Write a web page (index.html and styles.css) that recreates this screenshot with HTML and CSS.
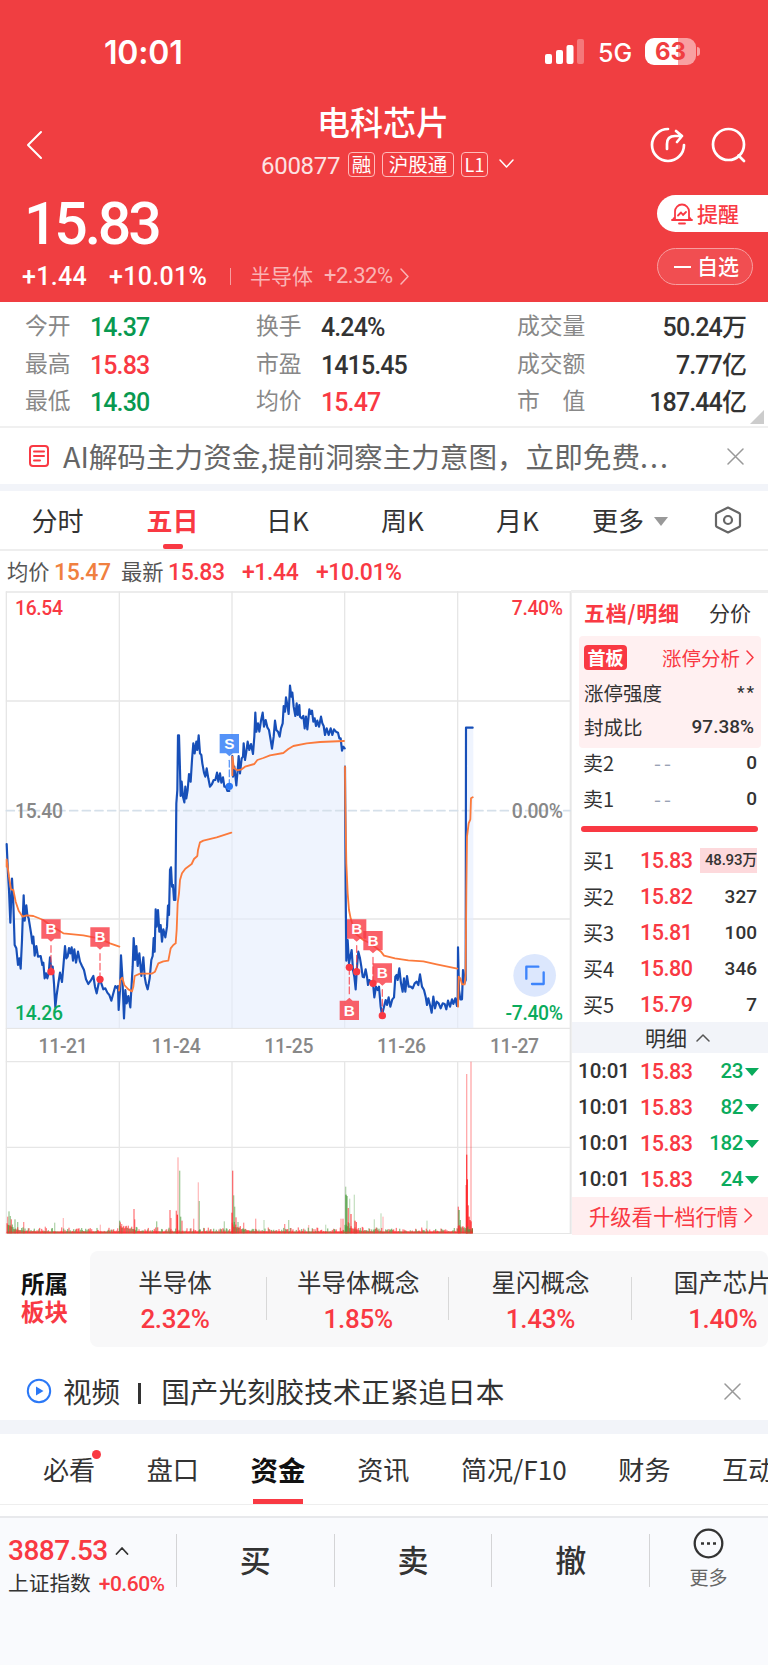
FILE: index.html
```
<!DOCTYPE html>
<html lang="zh-CN">
<head>
	<meta charset="UTF-8">
	<title>电科芯片 600877</title>
	<link rel="stylesheet" href="styles.css">
</head>
<body>
	<header class="top">
		<div class="status">
			<span class="clock">10:01</span>
			<svg class="signal" width="39" height="26" viewBox="0 0 39 26">
				<rect x="0" y="15" width="7" height="10" rx="2"/>
				<rect x="11" y="11" width="7" height="14" rx="2"/>
				<rect x="21.500" y="6" width="7" height="19" rx="2"/>
				<rect x="32" y="0" width="7" height="25" rx="2" opacity=".3"/>
			</svg>
			<span class="net">5G</span>
			<span class="battery">63</span>
			<i class="battery-cap"></i>
		</div>
		<div class="nav">
			<svg class="back" width="18" height="30" viewBox="0 0 18 30"><path d="M16 2L3 15l13 13"/></svg>
			<div class="name">
				<h1>电科芯片</h1>
				<div class="code">
					<span class="num">600877</span>
					<em class="t1">融</em><em class="t2">沪股通</em><em class="t3">L1</em>
					<svg width="15" height="10" viewBox="0 0 15 10"><path d="M1 1l6.500 7L14 1"/></svg>
				</div>
			</div>
			<svg class="share" width="36" height="36" viewBox="0 0 36 36"><path d="M18 2A16 16 0 1 0 34 18M17 22v-5q0-8 8-8h7M26 4l6 5-5 6"/></svg>
			<svg class="search" width="36" height="36" viewBox="0 0 36 36"><circle cx="17.500" cy="17.500" r="15.500"/><path d="M27.500 28.500L33 34"/></svg>
		</div>
		<div class="quote">
			<div class="price num">15.83</div>
			<div class="change">
				<b class="num">+1.44</b><b class="num pct">+10.01%</b>
				<i></i>
				<span>半导体</span><span class="num ind">+2.32%</span>
				<svg width="10" height="17" viewBox="0 0 10 17"><path d="M1 1l7 7.500L1 16"/></svg>
			</div>
			<div class="actions">
				<a class="alert">
					<svg width="22" height="22" viewBox="0 0 22 22"><path d="M4 16V8.500a7 7 0 0 1 14 0V16M1 17h20M8 20.500h6M7 12.500l3-3 2 2.500 3-3M1.500 17L4 14M20.500 17L18 14"/></svg>
					提醒
				</a>
				<a class="fav"><i></i>自选</a>
			</div>
		</div>
	</header>

	<section class="stats">
		<dl><dt>今开</dt><dd class="down">14.37</dd><dt>最高</dt><dd class="up">15.83</dd><dt>最低</dt><dd class="down">14.30</dd></dl>
		<dl><dt>换手</dt><dd>4.24%</dd><dt>市盈</dt><dd>1415.45</dd><dt>均价</dt><dd class="up">15.47</dd></dl>
		<dl class="last"><dt>成交量</dt><dd>50.24万</dd><dt>成交额</dt><dd>7.77亿</dd><dt>市　值</dt><dd>187.44亿</dd></dl>
		<i class="corner"></i>
	</section>

	<div class="notice ad">
		<svg width="20" height="22" viewBox="0 0 20 22"><rect x="1" y="1" width="18" height="20" rx="3"/><path d="M5 6.500h10M5 11h10M5 15.500h6"/></svg>
		<p>AI解码主力资金,提前洞察主力意图，立即免费<span>...</span></p>
		<svg class="close" width="17" height="17" viewBox="0 0 17 17"><path d="M1 1l15 15M16 1L1 16"/></svg>
	</div>

	<nav class="period">
		<a>分时</a><a class="active">五日</a><a>日K</a><a>周K</a><a>月K</a>
		<a class="more">更多<i></i></a>
		<svg width="28" height="28" viewBox="0 0 28 28"><path d="M14 1.500l11 5.500q1 .500 1 1.500v11q0 1-1 1.500l-11 5.500-11-5.500q-1-.500-1-1.500v-11q0-1 1-1.500z"/><circle cx="14" cy="14" r="4"/></svg>
	</nav>

	<div class="legend">
		<span>均价</span><b class="num avg">15.47</b>
		<span>最新</span><b class="num">15.83</b><b class="num">+1.44</b><b class="num">+10.01%</b>
	</div>

	<main class="market">
		<!-- three drawing units per css pixel -->
		<svg class="chart" width="571" height="644" viewBox="0 0 1713 1932">
			<g class="grid">
				<path d="M19 6H1713M19 333H1710M19 987H1710M19 1315H1710M19 1415H1710M19 1672H1710M19 1931H1710"/>
				<path d="M19 6V1931M358 6V1315M696 6V1315M1034 6V1315M1373 6V1315M1711 6V1931M358 1415V1931M696 1415V1931M1034 1415V1931M1373 1415V1931"/>
			</g>
			<path id="area" class="area"/>
			<path class="mid" d="M19 662H1710"/>
			<path id="price" class="price-line"/>
			<path id="avg" class="avg-line"/>
			<g id="volume"></g>
			<g id="marks"></g>
			<g class="axis">
				<text class="red" x="45" y="74">16.54</text>
				<text x="45" y="683">15.40</text>
				<text class="green" x="45" y="1290">14.26</text>
				<text class="red end" x="1688" y="74">7.40%</text>
				<text class="end" x="1688" y="683">0.00%</text>
				<text class="green end" x="1688" y="1290">-7.40%</text>
				<text class="date" x="189" y="1388">11-21</text>
				<text class="date" x="528" y="1388">11-24</text>
				<text class="date" x="866" y="1388">11-25</text>
				<text class="date" x="1204" y="1388">11-26</text>
				<text class="date" x="1543" y="1388">11-27</text>
			</g>
			<circle cx="1604" cy="1156" r="64" fill="#dce7fd"/>
			<path d="M1579 1166v-36h36M1596 1182h35v-35" fill="none" stroke="#3d84fb" stroke-width="7"/>
		</svg>

		<aside class="book">
			<div class="book-tabs"><b>五档/明细</b><span>分价</span></div>
			<div class="limit">
				<div><em>首板</em><span class="link">涨停分析<svg width="8" height="15" viewBox="0 0 8 15"><path d="M1 1l6 6.500L1 14"/></svg></span></div>
				<div><span>涨停强度</span><b class="stars">**</b></div>
				<div><span>封成比</span><b class="num">97.38%</b></div>
			</div>
			<ul class="levels sell">
				<li><span>卖2</span><i>--</i><b>0</b></li>
				<li><span>卖1</span><i>--</i><b>0</b></li>
			</ul>
			<div class="bar"></div>
			<ul class="levels">
				<li><span>买1</span><strong>15.83</strong><b class="hot">48.93万</b></li>
				<li><span>买2</span><strong>15.82</strong><b>327</b></li>
				<li><span>买3</span><strong>15.81</strong><b>100</b></li>
				<li><span>买4</span><strong>15.80</strong><b>346</b></li>
				<li><span>买5</span><strong>15.79</strong><b>7</b></li>
			</ul>
			<div class="detail">明细<svg width="14" height="9" viewBox="0 0 14 9"><path d="M1 8l6-6 6 6"/></svg></div>
			<ul class="levels ticks">
				<li><span>10:01</span><strong>15.83</strong><b>23</b></li>
				<li><span>10:01</span><strong>15.83</strong><b>82</b></li>
				<li><span>10:01</span><strong>15.83</strong><b>182</b></li>
				<li><span>10:01</span><strong>15.83</strong><b>24</b></li>
			</ul>
			<div class="upgrade">升级看十档行情<svg width="9" height="15" viewBox="0 0 9 15"><path d="M1 1l6.500 6.500L1 14"/></svg></div>
		</aside>
	</main>

	<section class="sectors">
		<h2>所属<span>板块</span></h2>
		<ul>
			<li>半导体<b class="num">2.32%</b></li>
			<li>半导体概念<b class="num">1.85%</b></li>
			<li>星闪概念<b class="num">1.43%</b></li>
			<li>国产芯片<b class="num">1.40%</b></li>
		</ul>
	</section>

	<div class="notice video">
		<svg width="26" height="26" viewBox="0 0 26 26"><circle cx="13" cy="13" r="11.200"/><path d="M10 8.500v9l7.500-4.500z"/></svg>
		<p><span>视频</span><i></i>国产光刻胶技术正紧追日本</p>
		<svg class="close" width="17" height="17" viewBox="0 0 17 17"><path d="M1 1l15 15M16 1L1 16"/></svg>
	</div>

	<nav class="tabs">
		<a class="dot">必看</a><a>盘口</a><a class="active">资金</a><a>资讯</a><a>简况/F10</a><a>财务</a><a>互动</a>
	</nav>

	<footer class="trade">
		<div class="index">
			<p class="num">3887.53<svg width="14" height="9" viewBox="0 0 14 9"><path d="M1.500 8L7 2l5.500 6"/></svg></p>
			<p>上证指数<b class="num">+0.60%</b></p>
		</div>
		<a>买</a><a>卖</a><a>撤</a>
		<div class="other">
			<svg width="31" height="31" viewBox="0 0 31 31"><circle cx="15.500" cy="15.500" r="13.800"/><path d="M8 15.500h3M14 15.500h3M20 15.500h3"/></svg>
			更多
		</div>
	</footer>
	<script src="chart.js"></script>
</body>
</html>
```
FILE: styles.css
```
/*--reset--*/
* {
	box-sizing: border-box;
}
body, h1, h2, p, ul, dl, dd {
	margin: 0;
	padding: 0;
}
body {
	width: 768px;
	height: 1665px;
	overflow: hidden;
	background: #fff;
	color: #333;
	font-family: "Noto Sans CJK SC", sans-serif;
}
ul {
	list-style: none;
}
em, i {
	font-style: normal;
}
svg {
	display: block;
	flex: none;
	fill: none;
	stroke-linecap: round;
	stroke-linejoin: round;
}
.num, dd, .levels b, .levels strong, .ticks span {
	font-family: Roboto, "Noto Sans CJK SC", sans-serif;
	font-weight: 500;
}
.up {
	color: #f93943;
}
.down {
	color: #089950;
}

/* header */
.top {
	height: 302px;
	background: #f03e41;
	color: #fff;
}
.top svg {
	stroke: #fff;
	stroke-width: 2;
}
.status {
	display: flex;
	align-items: center;
	height: 103px;
	padding: 0 68px 0 104px;
	font-family: Inter, sans-serif;
}
.clock {
	width: 441px;
	padding-top: 2px;
	font-size: 32px;
	font-weight: 600;
	letter-spacing: -.200px;
}
.top .signal {
	fill: #fff;
	stroke: none;
}
.net {
	width: 61px;
	padding: 2px 0 0 14px;
	font-size: 25px;
	font-weight: 500;
}
.battery {
	width: 51px;
	height: 27px;
	border-radius: 9px;
	background: linear-gradient(90deg, #fff 64%, #f8a0a1 64%);
	color: #f03e41;
	font-size: 24px;
	font-weight: 700;
	line-height: 27px;
	text-align: center;
}
.battery-cap {
	width: 3px;
	height: 9px;
	margin-left: 1px;
	border-radius: 0 4px 4px 0;
	background: #f8a0a1;
}
.nav {
	display: flex;
	height: 91px;
}
.back {
	margin: 27px 0 0 25px;
}
.name {
	width: 607px;
	padding-left: 218px;
}
.name h1 {
	margin: -3px 0 3px 56px;
	font-size: 33px;
	font-weight: 500;
	line-height: 42px;
}
.code {
	display: flex;
	align-items: center;
	height: 38px;
	white-space: nowrap;
}
.code .num {
	width: 87px;
	padding-top: 3px;
	font-size: 24px;
	font-weight: 400;
	letter-spacing: -.3px;
	opacity: .85;
}
.code em {
	height: 25px;
	margin-right: 7px;
	border: 1px solid #fbb;
	border-radius: 4px;
	font-size: 19.500px;
	line-height: 22px;
	text-align: center;
}
.code .t1 {
	width: 27px;
}
.code .t2 {
	width: 72px;
}
.code .t3 {
	width: 27px;
	margin-right: 11px;
	font-size: 18px;
}
.top .code svg {
	stroke-width: 1.500;
}
.nav .share {
	margin-top: 24px;
}
.nav .search {
	margin: 24px 0 0 25px;
}
.top .share, .top .search {
	stroke-width: 2.700;
}
.quote {
	display: grid;
	grid-template-columns: 657px 111px;
	grid-template-rows: 60px 48px;
}
.price {
	padding-left: 24px;
	font-size: 59px;
	line-height: 60px;
	letter-spacing: -3.200px;
}
.change {
	display: flex;
	align-items: center;
	padding: 0 0 3px 22px;
	font-size: 21px;
	line-height: 44px;
}
.change b {
	width: 87px;
	font-size: 25px;
	letter-spacing: .300px;
}
.change .pct {
	width: 121px;
}
.change i {
	width: 1px;
	height: 17px;
	margin-right: 19px;
	background: #f79fa0;
}
.change span {
	width: 74px;
	margin-top: -3px;
	color: #fab4b5;
}
.change .ind {
	margin-top: -1px;
	font-size: 22px;
	font-weight: 400;
	letter-spacing: -.500px;
}
.top .change svg {
	margin-left: 2px;
	stroke: #fab4b5;
	stroke-width: 1.500;
}
.actions {
	grid-column: 2;
	grid-row: 1 / 3;
}
.actions a {
	display: flex;
	align-items: center;
	width: 111px;
	height: 37px;
	margin-top: 1px;
	padding: 0 0 2px 14px;
	border-radius: 19px 0 0 19px;
	background: #fff;
	color: #f93943;
	font-size: 21px;
	font-weight: 500;
}
.top .alert svg {
	margin: 2px 4px 0 0;
	stroke: #f93943;
	stroke-width: 1.800;
}
.actions .fav {
	width: 96px;
	margin-top: 16px;
	padding-bottom: 3px;
	border: 1px solid #f79fa0;
	border-radius: 19px;
	background: #f14e51;
	color: #fff;
}
.fav i {
	width: 17px;
	height: 2px;
	margin: 3px 6px 0 2px;
	background: #fff;
}

/* day stats */
.stats {
	position: relative;
	display: flex;
	height: 126px;
	padding: 6px 22px 0 25px;
	border-bottom: 2px solid #f0f0f0;
}
.stats dl {
	display: grid;
	grid-template-columns: 65px 166px;
	grid-auto-rows: 37.500px;
	line-height: 37px;
}
.stats .last {
	grid-template-columns: 100px 129px;
	margin-left: 30px;
}
.stats dt {
	margin-top: -2px;
	color: #888;
	font-size: 22.800px;
}
.stats dd {
	padding-top: 1px;
	font-size: 25px;
	letter-spacing: -.900px;
}
.stats .last dd {
	text-align: right;
}
.corner {
	position: absolute;
	right: 4px;
	bottom: 2px;
	border-left: 14px solid transparent;
	border-bottom: 14px solid #ccc;
}

/* one-line notices */
.notice {
	display: flex;
	align-items: center;
	height: 56px;
	padding-left: 29px;
	font-size: 28.600px;
}
.notice p {
	margin-top: -2px;
	padding-left: 14px;
	white-space: nowrap;
}
.notice .close {
	stroke: #999;
	stroke-width: 1.500;
}
.ad {
	color: #666;
	stroke: #f93943;
	stroke-width: 2;
}
.ad p {
	width: 678px;
}
.ad span {
	letter-spacing: 2px;
}
.period {
	display: flex;
	height: 67px;
	border-top: 7px solid #f2f4f9;
	border-bottom: 2px solid #eee;
	font-size: 26px;
	line-height: 57px;
}
.period a {
	width: 115px;
	text-align: center;
}
.period .active {
	position: relative;
	color: #f93943;
	font-weight: 700;
}
.period .active::after {
	content: "";
	position: absolute;
	left: 48px;
	bottom: 0;
	width: 20px;
	height: 5px;
	border-radius: 2px;
	background: #f93943;
}
.period .more {
	display: flex;
	align-items: center;
	height: 57px;
	width: 138px;
	padding-left: 17px;
}
.more i {
	margin: 4px 0 0 10px;
	border: 7px solid transparent;
	border-top: 9px solid #999;
	border-bottom: 0;
}
.period svg {
	margin: 15px 0 0 1px;
	stroke: #666;
	stroke-width: 2.200;
}
.legend {
	display: flex;
	height: 39px;
	padding-left: 7px;
	color: #555;
	font-size: 21.300px;
	line-height: 40px;
	white-space: nowrap;
}
.legend span {
	width: 47px;
}
.legend b {
	width: 74px;
	color: #f93943;
	font-size: 23px;
	line-height: 44px;
	letter-spacing: -.400px;
}
.legend .avg {
	width: 67px;
	color: #f08040;
}

/* chart */
.market {
	display: flex;
	height: 644px;
}
.grid {
	stroke: #e6e6e6;
	stroke-width: 4;
}
.area {
	fill: #e5ecfd;
	fill-opacity: .6;
}
.mid {
	stroke: #d5e0ea;
	stroke-width: 5;
	stroke-dasharray: 24 14;
}
.price-line {
	stroke: #174fb8;
	stroke-width: 6.500;
}
.avg-line {
	stroke: #fb7a3c;
	stroke-width: 5.500;
}
.axis text {
	fill: #888;
	font-family: Roboto, sans-serif;
	font-size: 58px;
	font-weight: 500;
	letter-spacing: -1px;
}
.axis .red {
	fill: #f93943;
}
.axis .green {
	fill: #0aab5c;
}
.axis .end {
	text-anchor: end;
}
.axis .date {
	text-anchor: middle;
}
.mark text {
	fill: #fff;
	stroke: none;
	font: 700 46px "Liberation Sans", sans-serif;
	text-anchor: middle;
}

/* order book */
.book {
	width: 197px;
	border-top: 3px solid #eee;
	border-left: 1px solid #eee;
}
.book-tabs {
	display: flex;
	height: 43px;
	padding-left: 12px;
	font-size: 21px;
	line-height: 39px;
}
.book-tabs b {
	width: 125px;
	color: #f93943;
	letter-spacing: .700px;
}
.limit {
	width: 182px;
	height: 112px;
	margin-left: 7px;
	padding: 0 7px 0 5px;
	border-radius: 4px;
	background: #fff0f1;
	font-size: 19.500px;
}
.limit div {
	display: flex;
	align-items: center;
	justify-content: space-between;
	height: 34px;
}
.limit div:first-child {
	height: 39px;
	padding-top: 4px;
}
.limit em {
	width: 43px;
	height: 25px;
	border-radius: 4px;
	background: #f93943;
	color: #fff;
	font-size: 18px;
	font-weight: 700;
	line-height: 25px;
	text-align: center;
}
.limit .num {
	font-size: 19px;
}
.link {
	display: flex;
	align-items: center;
	color: #f93943;
}
.link svg, .upgrade svg {
	margin-left: 6px;
	stroke: #f93943;
	stroke-width: 1.500;
}
.limit .stars {
	font: 500 17px/14px Roboto, sans-serif;
	letter-spacing: 2px;
	margin-right: -2px;
}
.levels {
	padding-right: 11px;
	padding-left: 11px;
	font-size: 20px;
}
.levels li {
	display: flex;
	align-items: center;
	height: 36px;
}
.sell {
	height: 66px;
	margin-top: -4px;
	margin-bottom: 16px;
}
.levels span {
	width: 57px;
}
.levels i {
	width: 40px;
	padding-left: 14px;
	color: #99a3b5;
	letter-spacing: 3px;
}
.levels b {
	margin-left: auto;
	font-size: 19px;
}
.levels strong {
	color: #f93943;
	font-size: 21.500px;
	letter-spacing: -.500px;
}
.bar {
	width: 177px;
	height: 6px;
	margin: 0 0 10px 9px;
	border-radius: 3px;
	background: #f93943;
}
.levels .hot {
	height: 25px;
	width: 57px;
	padding-left: 5px;
	background: #fdd9dc;
	font-size: 15px;
	line-height: 25px;
	letter-spacing: -.200px;
	white-space: nowrap;
}
.detail {
	display: flex;
	align-items: center;
	height: 31px;
	padding: 0 0 2px 73px;
	background: #f2f4f9;
	font-size: 21px;
}
.detail svg {
	margin: 2px 0 0 9px;
	stroke: #555;
	stroke-width: 1.500;
}
.ticks {
	height: 144px;
	padding-left: 6px;
	padding-right: 9px;
}
.ticks span {
	width: 62px;
	font-size: 20.500px;
}
.ticks b {
	color: #0aab5c;
	font-size: 20.500px;
	letter-spacing: -.400px;
}
.ticks b::after {
	content: "";
	display: inline-block;
	margin-left: 2px;
	border: 7px solid transparent;
	border-top: 8px solid #0aab5c;
	border-bottom: 0;
	vertical-align: 2px;
}
.upgrade {
	display: flex;
	align-items: center;
	height: 38px;
	padding: 0 0 2px 17px;
	background: #ffeeef;
	color: #f93943;
	font-size: 21.300px;
}

/* sectors */
.sectors {
	display: flex;
	height: 129px;
	padding-top: 17px;
}
.sectors h2 {
	width: 90px;
	padding: 18px 0 0 21px;
	color: #111;
	font-size: 23.500px;
	line-height: 28px;
}
.sectors h2 span {
	display: block;
	color: #f93943;
}
.sectors ul {
	display: flex;
	width: 678px;
	height: 96px;
	border-radius: 8px;
	overflow: hidden;
	background: #f8f8f9;
}
.sectors li {
	position: relative;
	flex: none;
	width: 182.300px;
	padding-top: 13px;
	font-size: 24.500px;
	line-height: 36px;
	text-align: center;
	white-space: nowrap;
}
.sectors li:first-child {
	width: 177px;
	padding-right: 7px;
}
.sectors li::after {
	content: "";
	position: absolute;
	top: 26px;
	right: 0;
	width: 1px;
	height: 43px;
	background: #d8d8d8;
}
.sectors b {
	display: block;
	padding-top: 1px;
	color: #f93943;
	font-size: 26px;
	letter-spacing: -.300px;
}
.video {
	height: 57px;
	padding: 0 0 1px 26px;
	stroke: #2b78f6;
	stroke-width: 2;
}
.video path {
	fill: #2b78f6;
	stroke: none;
}
.video .close path {
	stroke: #999;
}
.video p {
	width: 672px;
	padding-left: 11px;
}
.video i {
	display: inline-block;
	width: 3px;
	height: 21px;
	margin: 0 20px 0 18px;
	background: #333;
	vertical-align: -1px;
}

/* page tabs */
.tabs {
	display: flex;
	height: 85px;
	border-top: 14px solid #f2f4f9;
	border-bottom: 1px solid #eee;
	padding-left: 43px;
	gap: 51.600px;
	overflow: hidden;
	font-size: 26.100px;
	line-height: 71px;
	white-space: nowrap;
}
.tabs a {
	position: relative;
	flex: none;
}
.tabs .active {
	color: #111;
	font-size: 27.500px;
	font-weight: 700;
}
.tabs .active::after {
	content: "";
	position: absolute;
	bottom: 0;
	left: 2px;
	width: 50px;
	height: 5px;
	background: #f93943;
}
.dot::after {
	content: "";
	position: absolute;
	top: 16px;
	right: -6px;
	width: 9px;
	height: 9px;
	border-radius: 50%;
	background: #f93943;
}

/* trade bar */
.trade {
	display: flex;
	height: 149px;
	margin-top: 11px;
	padding-top: 16px;
	border-top: 2px solid #e8e9ec;
	background: #f9fafd;
}
.trade > a, .other {
	height: 53px;
	width: 157.700px;
	border-left: 1px solid #d4d4d6;
	font-size: 31px;
	font-weight: 500;
	line-height: 50px;
	text-align: center;
}
.index {
	width: 176px;
	padding-left: 8px;
	font-size: 20.700px;
	line-height: 31px;
	white-space: nowrap;
}
.index p:first-child {
	display: flex;
	align-items: center;
	color: #f93943;
	font-size: 28px;
	line-height: 33px;
	letter-spacing: -.500px;
}
.index svg {
	margin-left: 7px;
	stroke: #333;
	stroke-width: 1.800;
}
.index b {
	margin-left: 8px;
	color: #f93943;
	font-size: 21px;
	letter-spacing: -.500px;
}
.trade .other {
	display: flex;
	flex-direction: column;
	align-items: center;
	width: 118px;
	color: #666;
	font-size: 19px;
	font-weight: 400;
	line-height: 28px;
}
.other svg {
	margin: -6px 0 4px;
	stroke: #333;
	stroke-width: 2.300;
	stroke-linecap: butt;
}
```
FILE: chart.js
```
// x,y pairs, one string per trading day
const price = [
	'20,762 24,850 27,900 31,998 36,866 40,940 44,1065 49,1075 54,1125 58,1105 62,1136 66,1050 68,990 71,916 74,992 79,946 82,975 86,985 90,1010 94,1035 97,1060 100,1040 104,1097 109,1068 114,1100 122,1098 127,1125 130,1118 134,1165 138,1150 142,1165 146,1150 150,1102 153,1130 158,1130 162,1180 166,1252 170,1215 175,1180 180,1148 186,1176 190,1130 195,1068 199,1105 203,1100 207,1074 211,1090 215,1072 219,1112 223,1078 228,1118 234,1085 240,1115 246,1128 252,1140 258,1168 265,1182 272,1172 280,1158 285,1190 290,1210 296,1180 300,1168 304,1180 310,1198 316,1195 322,1208 328,1215 334,1232 340,1210 346,1188 352,1195 354,1188 356,1260',
	'356,1260 360,1200 363,1096 367,1160 372,1285 376,1200 380,1240 385,1218 391,1252 395,1180 398,1130 401,1044 405,1110 409,1068 413,1128 418,1090 424,1158 430,1102 434,1160 438,1182 443,1198 449,1165 454,1110 458,1098 461,1044 464,1085 467,958 470,1010 474,960 478,1025 482,1005 486,1055 490,1018 496,1042 501,1010 504,947 507,975 510,840 513,832 516,890 519,885 522,930 526,930 529,640 532,600 534,436 537,436 540,540 542,618 545,575 549,620 553,637 556,590 559,625 563,600 567,552 572,575 576,510 580,460 584,490 589,455 592,480 596,436 600,490 604,495 607,520 612,548 616,560 620,535 625,565 630,590 636,582 641,570 646,570 651,548 655,575 660,550 664,578 669,562 673,590 678,590 682,603 688,603',
	'697,498 699,560 703,530 709,586 713,540 716,498 720,550 725,505 729,500 731,460 735,510 739,485 743,455 748,480 753,462 759,492 763,440 766,368 769,425 774,400 778,425 783,392 788,368 792,410 797,390 802,412 807,420 812,450 816,476 821,440 825,392 829,420 834,425 839,440 843,415 848,400 851,348 855,365 858,322 862,345 866,372 870,287 874,320 877,308 881,350 886,378 890,340 893,375 898,345 900,380 905,385 910,378 914,415 918,380 922,418 928,358 932,372 936,362 940,395 944,385 948,408 952,392 957,410 963,380 967,400 971,408 975,435 980,415 986,435 992,415 997,435 1002,418 1008,425 1014,428 1018,445 1022,445 1026,482 1030,470 1034,475',
	'1035,530 1037,900 1039,1112 1043,1050 1047,1120 1055,1080 1059,1140 1063,1160 1067,1198 1071,1130 1075,1085 1080,1105 1084,1130 1088,1160 1092,1162 1097,1138 1101,1160 1104,1185 1108,1170 1114,1180 1120,1190 1123,1222 1128,1190 1133,1200 1137,1190 1142,1250 1146,1275 1152,1250 1157,1230 1161,1245 1166,1222 1171,1250 1177,1228 1182,1222 1186,1160 1190,1155 1193,1170 1198,1135 1203,1180 1208,1205 1212,1165 1216,1205 1221,1158 1226,1190 1232,1190 1238,1195 1244,1180 1250,1175 1255,1185 1260,1153 1266,1190 1272,1200 1277,1220 1281,1245 1285,1225 1290,1245 1295,1268 1300,1220 1305,1255 1310,1235 1316,1240 1322,1255 1328,1240 1334,1242 1339,1258 1344,1232 1350,1250 1356,1228 1360,1242 1366,1225 1371,1248',
	'1373,1248 1374,1072 1377,1200 1381,1228 1386,1228 1389,1140 1393,1180 1397,1170 1398,413 1418,413'
]
const avg = [
	'20,830 20,808 27,860 33,898 40,900 47,935 56,962 68,980 80,976 100,978 130,990 150,1005 190,1030 250,1036 300,1046 330,1060 358,1070',
	'357,1202 361,1170 367,1163 373,1185 385,1198 396,1204 400,1190 404,1158 420,1151 455,1151 465,1145 475,1120 490,1114 505,1112 512,1075 520,1065 527,1060 530,1020 533,940 537,910 540,870 546,850 556,836 575,822 582,807 592,798 594,780 600,757 610,752 650,742 694,728',
	'697,556 697,500 702,535 712,541 725,538 735,530 763,522 772,510 790,504 810,496 850,489 865,477 880,468 920,460 960,456 1032,453',
	'1035,530 1036,640 1039,820 1043,910 1047,960 1052,985 1065,1030 1090,1050 1115,1062 1143,1085 1152,1097 1185,1105 1225,1111 1270,1114 1310,1123 1372,1136',
	'1374,1250 1376,1160 1381,1165 1386,1183 1394,1183 1397,1150 1399,900 1401,740 1406,700 1411,688 1413,625 1418,622'
]
const el = id => document.getElementById(id)
const line = days => days.map(d => 'M' + d.split(' ').join('L')).join('')

el('price').setAttribute('d', line(price))
el('avg').setAttribute('d', line(avg))
el('area').setAttribute('d', 'M20,1314L' + price.join(' ').split(' ').join('L') + 'L1420,413V1314Z')

// volume: [x, height, colour, opacity]
const R = '#ff2a2e', G = '#4a9c3c'
const spikes = [
	[22, 50, R, .5], [26, 66, G, .5], [30, 52, G, .5], [33, 42, R, .6], [44, 42, G, .5], [52, 34, G, .5], [70, 34, R, .5], [135, 20, R, .5], [163, 32, G, .4], [189, 46, R, .3], [300, 26, R, .3], [358, 38, G, .6], [364, 28, R, .5],
	[401, 73, R, .6], [403, 42, R, .6], [469, 36, G, .5], [509, 70, R, .6], [512, 46, R, .5], [528, 68, R, .6], [531, 56, R, .9], [533, 228, R, .35], [538, 188, G, .5], [541, 50, G, .6], [545, 38, R, .6], [580, 44, R, .4], [594, 153, R, .3], [597, 97, G, .45], [672, 36, G, .4],
	[695, 62, R, .8], [697, 188, R, .65], [700, 114, G, .5], [703, 80, G, .5], [707, 48, R, .6], [713, 34, G, .5], [730, 32, R, .5], [766, 44, R, .4], [791, 40, G, .3], [853, 28, R, .5], [865, 40, G, .4], [925, 25, R, .3], [976, 26, G, .3],
	[1022, 44, R, .4], [1028, 44, R, .5], [1036, 140, G, .4], [1037, 116, G, .9], [1040, 112, G, .7], [1044, 76, R, .6], [1048, 104, G, .3], [1052, 58, R, .7], [1062, 116, G, .3], [1064, 38, R, .8], [1068, 34, R, .7], [1122, 42, G, .3], [1142, 60, G, .3], [1148, 50, R, .3], [1280, 38, G, .3],
	[1374, 80, R, .6], [1376, 70, G, .8], [1380, 40, G, .6], [1399, 478, R, .4], [1399, 236, R, .8], [1398, 145, R, .9], [1401, 162, R, .9], [1403, 84, R, .9], [1406, 50, R, .9], [1409, 40, R, .9], [1412, 515, R, .4], [1412, 36, R, .9], [1416, 15, R, 1]
]
const opens = [20, 358, 696, 1034, 1373]
let seed = 7
const rand = () => (seed = seed * 16807 % 2147483647) / 2147483647
for (let x = 20; x < 1418; x += 2) {
	let open = opens.filter(o => o <= x).pop()
	let h = 5 + rand() ** 4 * 13 + 24 * Math.exp((open - x) / 25) * (.6 + rand() * .5)
	spikes.push([x, h, rand() < .58 ? R : G, .6])
	spikes.push([x, 5, R, .5])
}
el('volume').innerHTML = spikes.map(([x, h, c, o]) => `<rect x="${x - 1}" y="${1930 - h}" width="4" height="${h}" fill="${c}" opacity="${o}"/>`).join('')

// buy / sell marks: x, label centre y, trade y, letter
const marks = [[153, 1017, 1145, 'B'], [300, 1041, 1168, 'B'], [688, 461, 589, 'S'], [1048, 1261, 1132, 'B'], [1070, 1017, 1145, 'B'], [1119, 1052, 1180, 'B'], [1147, 1149, 1277, 'B']]
el('marks').innerHTML = marks.map(([x, y, to, s]) => {
	let c = s === 'S' ? '#2b78f6' : '#f93943'
	let dir = to > y ? 1 : -1
	return `<g class="mark"><path d="M${x} ${y + 50 * dir}V${to}" stroke="${c}" stroke-width="4" stroke-dasharray="20 9" opacity=".75"/>
		<circle cx="${x}" cy="${to}" r="11" fill="${c}"/>
		<path d="M${x - 29} ${y - 29}h58v58h-58zM${x - 10} ${y + 29 * dir}h20l-10 ${9 * dir}z" fill="${c}" opacity=".8"/>
		<text x="${x}" y="${y + 16}">${s}</text></g>`
}).join('')
```
